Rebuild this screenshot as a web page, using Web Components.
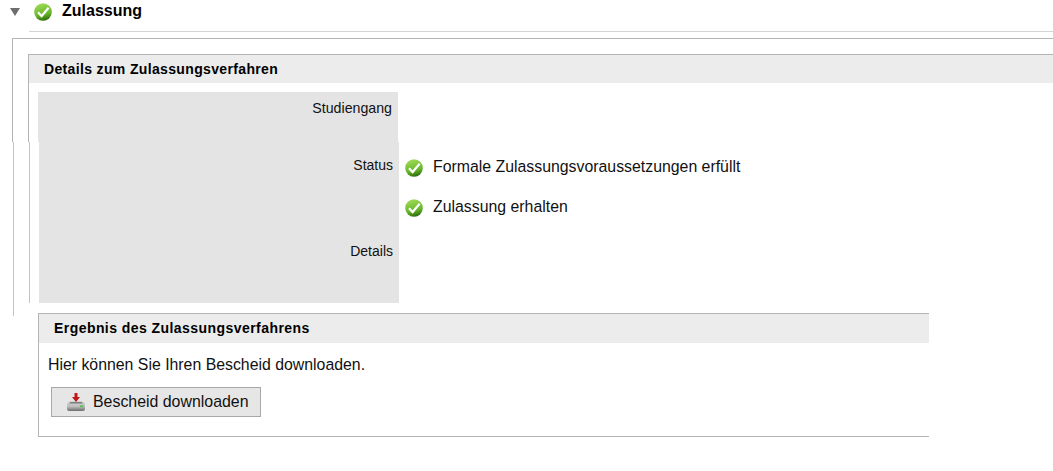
<!DOCTYPE html>
<html lang="de">
<head>
<meta charset="utf-8">
<title>Zulassung</title>
<style>
  html, body { margin: 0; background: #fff; overflow: hidden; }
  body { font-family: "Liberation Sans", Arial, sans-serif; color: #000; width: 1053px; height: 471px; }
</style>
</head>
<body>

<app-heading title-text="Zulassung"></app-heading>

<seam-top>
  <section-title slot="title">Details zum Zulassungsverfahren</section-title>
  <label-cell>Studiengang</label-cell>
</seam-top>

<seam-bottom>
  <status-row slot="status">Formale Zulassungsvoraussetzungen erfüllt</status-row>
  <status-row slot="status">Zulassung erhalten</status-row>
  <result-box slot="result">
    <section-title slot="title" style="letter-spacing:.44px">Ergebnis des Zulassungsverfahrens</section-title>
    <p-text>Hier können Sie Ihren Bescheid downloaden.</p-text>
    <download-button>Bescheid downloaden</download-button>
  </result-box>
</seam-bottom>

<script>
const html = String.raw;

// ids are per shadow root, so the gradient has to travel with the icon
const checkIcon = (size) => html`
  <svg width="${size}" height="${size}" viewBox="0 0 18 18" aria-hidden="true">
    <defs>
      <linearGradient id="ball" x1="0.3" y1="0" x2="0.55" y2="1">
        <stop offset="0" stop-color="#a2dc58"/>
        <stop offset="0.65" stop-color="#68b62c"/>
        <stop offset="1" stop-color="#2c6a08"/>
      </linearGradient>
    </defs>
    <circle cx="9" cy="9" r="8.8" fill="url(#ball)"/>
    <path d="M4 9.200 L7.600 13 L14.600 4.800" fill="none" stroke="#fff" stroke-width="2.200"/>
  </svg>`;

class AppHeading extends HTMLElement {
  constructor() {
    super();
    this.attachShadow({ mode: 'open' }).innerHTML = html`
      <style>
        :host { display: block; height: 32px; }
        .row { display: flex; align-items: center; height: 21px; padding: 1px 0 0 10px; }
        .arrow { width: 0; height: 0; border-left: 5px solid transparent; border-right: 5px solid transparent;
          border-top: 8px solid #6e6e6e; margin-right: 14px; margin-top: 1px; }
        svg { display: block; }
        h2 { margin: 0 0 0 10px; font-size: 16px; line-height: 20px; font-weight: bold; position: relative; top: -1px; }
        .rule { height: 1px; background: #d4d4d4; margin: 9px 0 0 29px; }
      </style>
      <div class="row">
        <span class="arrow"></span>
        ${checkIcon(18)}
        <h2>${this.getAttribute('title-text')}</h2>
      </div>
      <div class="rule"></div>`;
  }
}
customElements.define('app-heading', AppHeading);

class SectionTitle extends HTMLElement {
  constructor() {
    super();
    this.attachShadow({ mode: 'open' }).innerHTML = html`
      <style>
        :host { display: block; background: #ececec; height: 28px; line-height: 29px; padding-left: 15px;
          font-size: 14px; font-weight: bold; letter-spacing: .35px; color: #000; }
      </style>
      <slot></slot>`;
  }
}
customElements.define('section-title', SectionTitle);

class LabelCell extends HTMLElement {
  constructor() {
    super();
    this.attachShadow({ mode: 'open' }).innerHTML = html`
      <style>
        :host { display: block; width: 354px; height: 50px; margin: 9px 0 0 9px; background: #e4e4e4;
          padding-right: 6px; text-align: right; font-size: 14.2px; line-height: 32px; color: #111; }
      </style>
      <slot></slot>`;
  }
}
customElements.define('label-cell', LabelCell);

class SeamTop extends HTMLElement {
  constructor() {
    super();
    this.attachShadow({ mode: 'open' }).innerHTML = html`
      <style>
        :host { display: block; box-sizing: border-box; margin: 6px 0 0 12px; height: 104px; padding: 15px 0 0 15px;
          border-top: 1px solid #b4b4b4; border-left: 1px solid #b4b4b4; overflow: hidden; }
        .inner { border-top: 1px solid #b4b4b4; border-left: 1px solid #b4b4b4; height: 88px; }
      </style>
      <div class="inner">
        <slot name="title"></slot>
        <slot></slot>
      </div>`;
  }
}
customElements.define('seam-top', SeamTop);

class SeamBottom extends HTMLElement {
  constructor() {
    super();
    this.attachShadow({ mode: 'open' }).innerHTML = html`
      <style>
        :host { display: block; margin-left: 13px; height: 174px; padding-left: 15px;
          border-left: 1px solid #c4c4c4; }
        .inner { border-left: 1px solid #c4c4c4; height: 161px; display: grid;
          grid-template-columns: 360px 1fr; margin-bottom: 10px; padding-left: 9px; }
        .labels { background: #e4e4e4; text-align: right; padding-right: 6px; font-size: 14px; color: #111; }
        .labels div { line-height: 16px; }
        .labels div:first-child { padding-top: 15px; }
        .labels div:last-child { padding-top: 70px; }
        .values { padding: 17px 0 0 6px; }
      </style>
      <div class="inner">
        <div class="labels"><div>Status</div><div>Details</div></div>
        <div class="values"><slot name="status"></slot></div>
      </div>
      <slot name="result"></slot>`;
  }
}
customElements.define('seam-bottom', SeamBottom);

class StatusRow extends HTMLElement {
  constructor() {
    super();
    this.attachShadow({ mode: 'open' }).innerHTML = html`
      <style>
        :host { display: flex; align-items: center; gap: 10px; height: 18px; margin-bottom: 22px;
          font-size: 15.85px; line-height: 18px; color: #111; }
        svg { flex: none; display: block; }
        span { margin-top: -2px; }
      </style>
      ${checkIcon(18)}<span><slot></slot></span>`;
  }
}
customElements.define('status-row', StatusRow);

class ResultBox extends HTMLElement {
  constructor() {
    super();
    this.attachShadow({ mode: 'open' }).innerHTML = html`
      <style>
        :host { display: block; width: 890px; height: 122px; margin-left: 9px;
          border-top: 1px solid #b4b4b4; border-left: 1px solid #b4b4b4; border-bottom: 1px solid #b4b4b4; }
        ::slotted(section-title) { height: 29px; }
      </style>
      <slot name="title"></slot>
      <slot></slot>`;
  }
}
customElements.define('result-box', ResultBox);

class PText extends HTMLElement {
  constructor() {
    super();
    this.attachShadow({ mode: 'open' }).innerHTML = html`
      <style>
        :host { display: block; margin: 13px 0 0 9px; font-size: 15.85px; line-height: 18px; color: #111; }
      </style>
      <slot></slot>`;
  }
}
customElements.define('p-text', PText);

class DownloadButton extends HTMLElement {
  constructor() {
    super();
    this.attachShadow({ mode: 'open' }).innerHTML = html`
      <style>
        :host { display: flex; align-items: center; box-sizing: border-box; width: 210px; height: 30px;
          margin: 13px 0 0 12px; padding-left: 14px; gap: 7px; background: #e6e6e6; border: 1px solid #a8a8a8;
          font-size: 15.9px; color: #111; }
        svg { display: block; flex: none; }
      </style>
      <svg width="20" height="20" viewBox="0 0 20 20" aria-hidden="true">
        <defs>
          <linearGradient id="tray" x1="0" y1="0" x2="0" y2="1">
            <stop offset="0" stop-color="#d8d8d8"/>
            <stop offset="0.55" stop-color="#bcbcbc"/>
            <stop offset="1" stop-color="#6c6c6c"/>
          </linearGradient>
        </defs>
        <path d="M1 11.500 L3.500 9 H16.500 L19 11.500 V17 Q19 19 17 19 H3 Q1 19 1 17 Z" fill="url(#tray)"/>
        <path d="M3 11.500 L4.500 10 H15.500 L17 11.500 Z" fill="#7c7c7c"/>
        <rect x="14" y="13.500" width="3.500" height="1.500" fill="#49c24a"/>
        <path d="M8.500 1 H11.500 V5 H14 L10 10 L6 5 H8.500 Z" fill="#c01818"/>
      </svg>
      <span><slot></slot></span>`;
  }
}
customElements.define('download-button', DownloadButton);
</script>
</body>
</html>
